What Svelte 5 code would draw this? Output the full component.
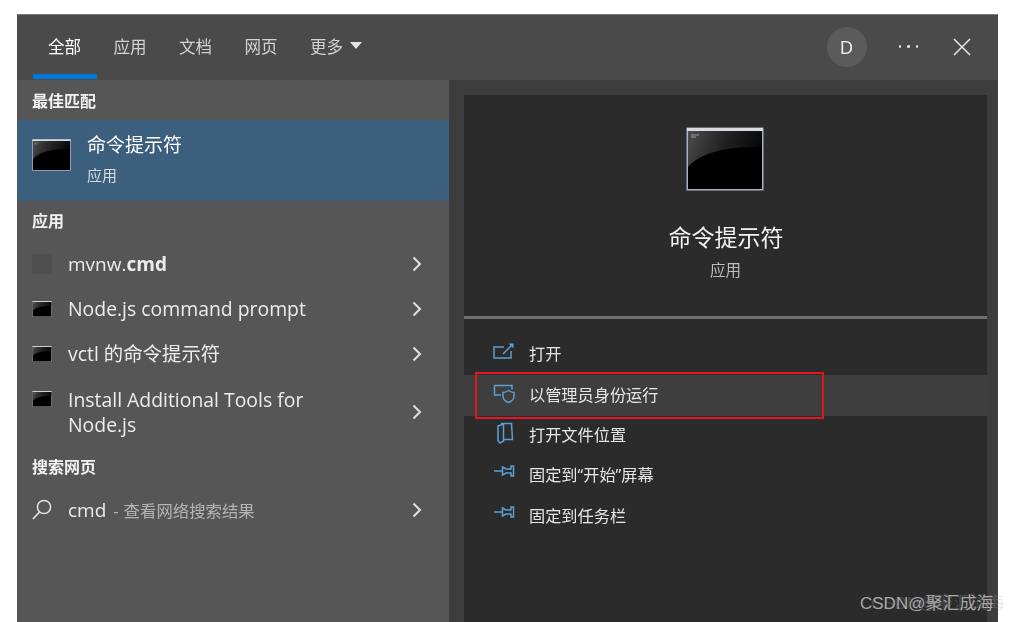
<script>
  const apps = [
    { lines: ['Node.js command prompt'] },
    { lines: ['vctl 的命令提示符'] },
    { lines: ['Install Additional Tools for', 'Node.js'] }
  ];
</script>

{#snippet cmdIcon(cls)}
  <svg class={cls} viewBox="0 0 78 64" aria-hidden="true">
    <defs>
      <linearGradient id="sheen" x1="0" y1="0" x2="1" y2="0.2">
        <stop offset="0" stop-color="#4c4c4c" />
        <stop offset="0.5" stop-color="#242424" />
        <stop offset="1" stop-color="#080808" />
      </linearGradient>
    </defs>
    <rect x="0.5" y="0.5" width="77" height="63" fill="#aab2c0" />
    <rect x="1" y="1" width="76" height="3" fill="#d8dbe2" />
    <rect x="2" y="4" width="74" height="58" fill="#000" />
    <path d="M2 4H76V20C50 20 18 22 2 40Z" fill="url(#sheen)" />
    <path d="M5 8h8M5 10h5" stroke="#9a9a9a" stroke-width="1" />
  </svg>
{/snippet}

{#snippet chevron()}
  <svg class="chevron" viewBox="0 0 10 16" aria-hidden="true">
    <path d="M1.5 1.5L8 8L1.5 14.5" fill="none" stroke="#e0e0e0" stroke-width="2" />
  </svg>
{/snippet}

{#snippet pin()}
  <svg class="action-icon" viewBox="0 0 22 24" aria-hidden="true">
    <path d="M1 8H9.5M9.5 4L13 6H18V3H20.5V13H18V10H13L9.5 12Z" />
  </svg>
{/snippet}

<div class="window">
  <header class="top">
    <nav class="tabs">
      <span class="tab active">全部</span>
      <span class="tab">应用</span>
      <span class="tab">文档</span>
      <span class="tab">网页</span>
      <span class="tab more">更多<i class="caret"></i></span>
    </nav>
    <div class="top-right">
      <span class="avatar">D</span>
      <span class="dots"><i></i><i></i><i></i></span>
      <svg class="close" viewBox="0 0 18 18" aria-hidden="true">
        <path d="M1 1L17 17M17 1L1 17" fill="none" stroke="#e6e6e6" stroke-width="1.6" />
      </svg>
    </div>
  </header>

  <div class="body">
    <section class="left">
      <h3>最佳匹配</h3>
      <div class="best">
        {@render cmdIcon('icon-best')}
        <div class="best-text">
          <div class="best-title">命令提示符</div>
          <div class="best-sub">应用</div>
        </div>
      </div>

      <h3>应用</h3>
      <div class="row">
        <span class="slot"><span class="blank"></span></span>
        <span class="label mvnw">mvnw.<b>cmd</b></span>
        {@render chevron()}
      </div>
      {#each apps as app}
        <div class="row" class:tall={app.lines.length > 1}>
          <span class="slot">{@render cmdIcon('icon-small')}</span>
          <span class="label">
            {#each app.lines as line}<span class="line">{line}</span>{/each}
          </span>
          {@render chevron()}
        </div>
      {/each}

      <h3>搜索网页</h3>
      <div class="row">
        <span class="slot">
          <svg class="search" viewBox="0 0 20 21" aria-hidden="true">
            <circle cx="12" cy="8" r="6.6" fill="none" stroke="#e4e4e4" stroke-width="1.5" />
            <path d="M7.5 13L1 20" fill="none" stroke="#e4e4e4" stroke-width="1.7" />
          </svg>
        </span>
        <span class="label mvnw">cmd<span class="hint"><span class="dash">-</span>查看网络搜索结果</span></span>
        {@render chevron()}
      </div>
    </section>

    <section class="right">
      <div class="detail">
        {@render cmdIcon('icon-large')}
        <div class="detail-title">命令提示符</div>
        <div class="detail-sub">应用</div>
      </div>
      <div class="actions">
        <div class="action">
          <svg class="action-icon" viewBox="0 0 22 24" aria-hidden="true">
            <path d="M11 5H1V16H18V9M10 12L18.5 3.5" />
            <path class="solid" d="M15.5 1.5H20.5V6.5Z" />
          </svg>
          <span>打开</span>
        </div>
        <div class="action hot">
          <svg class="action-icon" viewBox="0 0 22 24" aria-hidden="true">
            <path d="M8 12H1.5V2.5H19V6.5" />
            <path d="M15.5 7.5Q18.5 9.5 21 9.5V13C21 16.5 18.5 18.5 15.5 19.5C12.5 18.5 10 16.5 10 13V9.5Q12.5 9.5 15.5 7.5Z" />
          </svg>
          <span>以管理员身份运行</span>
        </div>
        <div class="action">
          <svg class="action-icon" viewBox="0 0 22 24" aria-hidden="true">
            <path d="M8 0.5H18.5L19.5 16.5H11M5 3L10.5 1V18L7 20L5 17.5Z" />
          </svg>
          <span>打开文件位置</span>
        </div>
        <div class="action">{@render pin()}<span>固定到“开始”屏幕</span></div>
        <div class="action">{@render pin()}<span>固定到任务栏</span></div>
      </div>
    </section>
  </div>
</div>

<div class="annotation"></div>
<div class="watermark">CSDN@聚汇成海</div>

<style>
  :global(body) {
    background: #fff;
    overflow: hidden;
  }
  .window {
    width: 981px;
    height: 608px;
    margin: 14px 0 0 17px;
    background: #3d3d3d;
    color: #f0f0f0;
    font-family: "Open Sans", "Noto Sans CJK SC", sans-serif;
    overflow: hidden;
    filter: blur(0.45px);
  }
  .top {
    height: 66px;
    box-sizing: border-box;
    border-top: 1px solid #7a7a7a;
    background: #4a4a4a;
    display: flex;
    align-items: stretch;
    justify-content: space-between;
    padding-left: 16px;
  }
  .tabs {
    display: flex;
  }
  .tab {
    display: flex;
    align-items: center;
    padding: 2px 15px 0;
    margin-right: 2px;
    width: 33.5px;
    white-space: nowrap;
    font-size: 16.5px;
    color: #d2d2d2;
    border-bottom: 5px solid transparent;
    box-sizing: content-box;
    margin-bottom: 1px;
    height: 57px;
  }
  .tab.active {
    color: #fff;
    border-bottom-color: #0078d7;
  }
  .more {
    width: auto;
    gap: 7px;
  }
  .caret {
    width: 0;
    height: 0;
    border-left: 6.5px solid transparent;
    border-right: 6.5px solid transparent;
    border-top: 7px solid #e4e4e4;
  }
  .top-right {
    display: flex;
    align-items: center;
    padding: 0 27px 2px 0;
  }
  .avatar {
    width: 40px;
    height: 40px;
    border-radius: 50%;
    background: #5b5b5b;
    display: flex;
    align-items: center;
    justify-content: center;
    font-size: 18.5px;
    color: #f2f2f2;
    margin-right: 32px;
  }
  .dots {
    display: flex;
    gap: 6px;
    margin-right: 35px;
  }
  .dots i {
    width: 2.5px;
    height: 2.5px;
    border-radius: 50%;
    background: #e0e0e0;
  }
  .close {
    width: 18px;
    height: 18px;
  }
  .body {
    display: flex;
    height: 542px;
  }
  .left {
    width: 432px;
    flex: none;
    background: #565656;
  }
  h3 {
    margin: 0;
    height: 40px;
    box-sizing: border-box;
    display: flex;
    align-items: center;
    padding-left: 15px;
    font-size: 16px;
    font-weight: 700;
    color: #f2f2f2;
  }
  h3:not(:first-child) {
    padding-bottom: 2px;
  }
  .best {
    height: 81px;
    background: #3c5f7e;
    display: flex;
    align-items: center;
    padding-left: 15px;
    gap: 16px;
  }
  .icon-best {
    width: 39px;
    height: 32px;
    display: block;
    margin-bottom: 11px;
  }
  .best-text {
    display: flex;
    flex-direction: column;
    margin-bottom: 4px;
  }
  .best-title {
    font-size: 19px;
    line-height: 30px;
    color: #fff;
  }
  .best-sub {
    font-size: 15px;
    line-height: 24px;
    margin-top: 3px;
    color: #d8dde2;
  }
  .row {
    height: 45px;
    display: flex;
    align-items: center;
    padding-left: 15px;
    font-size: 19.4px;
    color: #ececec;
  }
  .row.tall {
    height: 71px;
    align-items: center;
  }
  .slot {
    width: 36px;
    flex: none;
    display: flex;
    align-items: center;
  }
  .tall .slot {
    align-self: flex-start;
    padding-top: 15px;
  }
  .blank {
    width: 20px;
    height: 20px;
    border-radius: 2px;
    background: #4f4f4f;
  }
  .icon-small {
    width: 20px;
    height: 16px;
    display: block;
  }
  .search {
    width: 20px;
    height: 21px;
    display: block;
  }
  .label {
    flex: 1;
    white-space: nowrap;
  }
  .mvnw {
    font-size: 19px;
  }
  .line {
    display: block;
    line-height: 25px;
  }
  .hint {
    font-size: 16.4px;
    color: #b4b4b4;
  }
  .dash {
    margin: 0 5px 0 7px;
  }
  .chevron {
    width: 10px;
    height: 16px;
    flex: none;
    margin-right: 27px;
  }
  .right {
    width: 523px;
    flex: none;
    margin: 15px 0 0 15px;
    background: #2b2b2b;
  }
  .detail {
    height: 224px;
    box-sizing: border-box;
    border-bottom: 3px solid #6f6f6f;
    display: flex;
    flex-direction: column;
    align-items: center;
    padding-top: 32px;
    color: #f2f2f2;
  }
  .icon-large {
    width: 78px;
    height: 64px;
    display: block;
    margin-right: 2px;
  }
  .detail-title {
    font-size: 23px;
    line-height: 32px;
    margin: 30px 0 0 1px;
  }
  .detail-sub {
    font-size: 15.5px;
    line-height: 24px;
    margin-top: 5px;
    color: #bdbdbd;
  }
  .actions {
    padding-top: 16px;
  }
  .action {
    height: 40.4px;
    box-sizing: border-box;
    padding: 0 0 2px 29px;
    display: flex;
    align-items: center;
    gap: 14px;
    font-size: 16.2px;
    color: #e6e6e6;
  }
  .action span {
    margin-bottom: 2px;
  }
  .action.hot {
    background: #3e3e3e;
  }
  .action-icon {
    width: 22px;
    height: 24px;
    flex: none;
    overflow: visible;
    fill: none;
    stroke: #5b9fd6;
    stroke-width: 1.5;
  }
  .solid {
    fill: #5b9fd6;
    stroke: none;
  }
  .annotation {
    position: absolute;
    left: 475px;
    top: 372px;
    width: 349px;
    height: 47px;
    box-sizing: border-box;
    border: 2px solid #e3161f;
  }
  .watermark {
    position: absolute;
    left: 860px;
    top: 593px;
    white-space: nowrap;
    font-family: "Liberation Sans", "Noto Sans CJK SC", sans-serif;
    font-size: 17px;
    line-height: 22px;
    color: #a8a8a8;
    text-shadow: 11px 0 0 rgba(168, 168, 168, 0.25);
  }
</style>
